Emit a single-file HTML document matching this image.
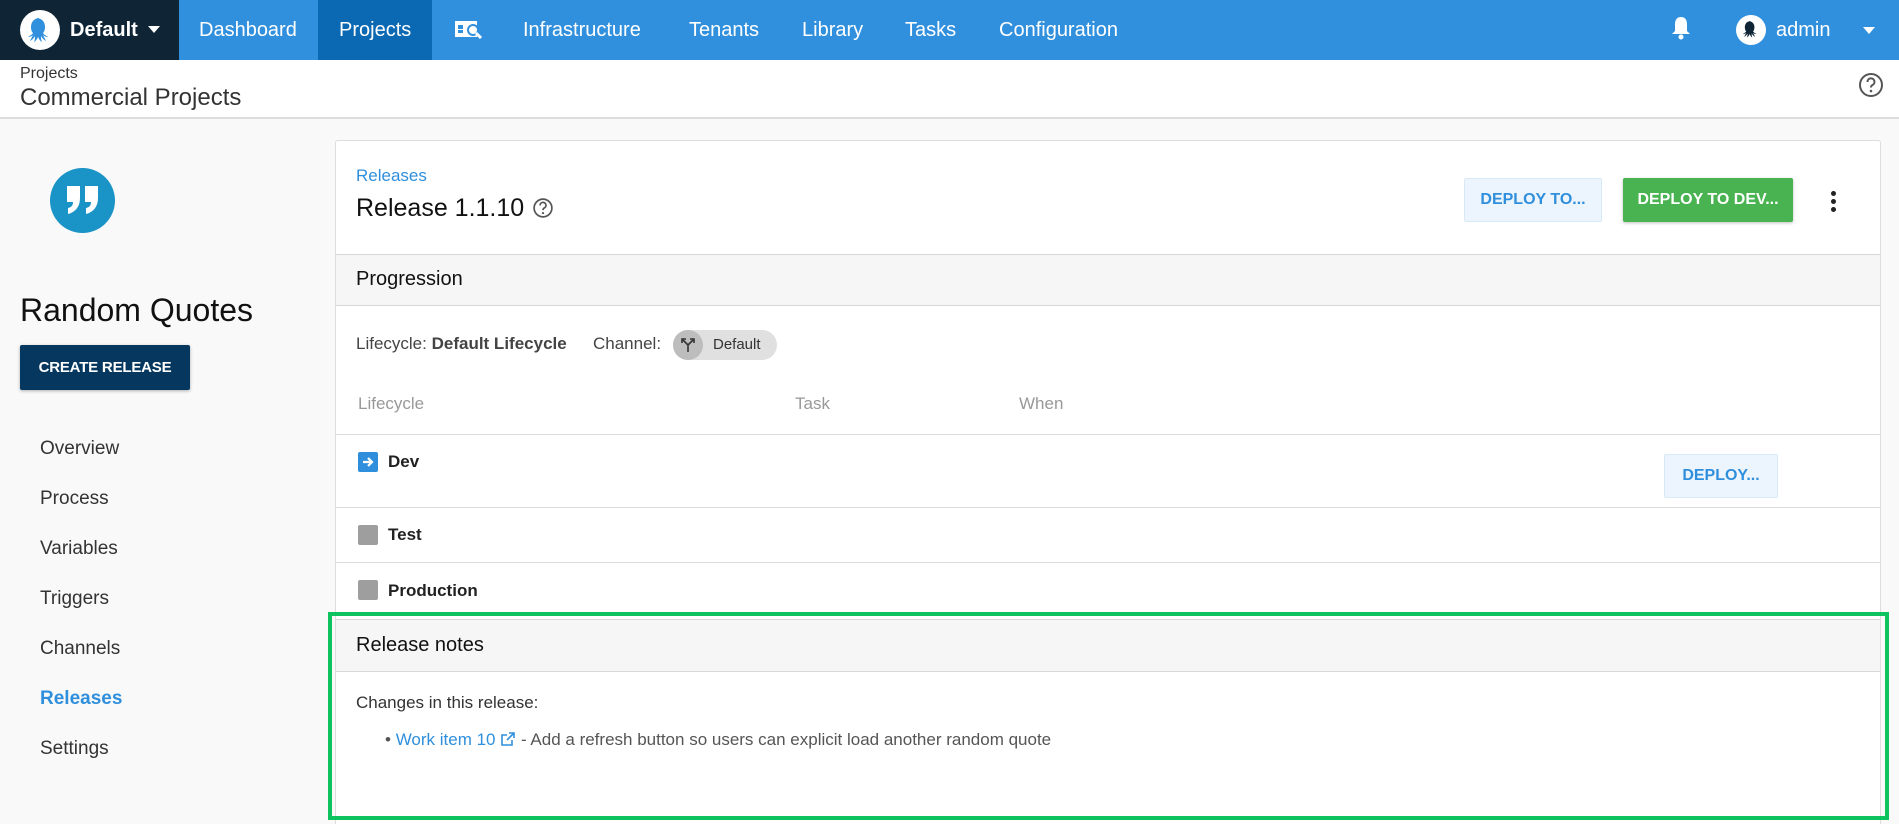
<!DOCTYPE html>
<html style="width:1899px;height:824px;overflow:hidden"><head><meta charset="utf-8"><style>
*{box-sizing:border-box;margin:0;padding:0}
body{width:1899px;height:824px;overflow:hidden;background:#f9f9f9;font-family:"Liberation Sans",Roboto,sans-serif;position:relative;color:#333}
.a{position:absolute;white-space:nowrap}
.nav{position:absolute;left:0;top:0;width:1899px;height:60px;background:#3190dd}
.nav .t{position:absolute;top:0;line-height:60px;color:#fff;font-size:20px}
.card{position:absolute;left:335px;top:140px;width:1546px;height:684px;background:#fff;border:1px solid #ddd;border-bottom:none;border-radius:3px 3px 0 0}
.sec{position:absolute;left:0;width:100%;background:#f6f6f6;border-top:1px solid #d8d8d8;border-bottom:1px solid #d8d8d8}
.hl{position:absolute;left:0;width:100%;height:1px;background:#dcdcdc}
.side{font-size:19px;color:#333;left:40px}
.sq{position:absolute;width:20px;height:20px;border-radius:2px;background:#9e9e9e}
</style></head><body>
<div class="nav">
 <div class="a" style="left:0;top:0;width:179px;height:60px;background:#0f2535"></div>
 <div class="a" style="left:318px;top:0;width:114px;height:60px;background:#0b68b2"></div>
 <div class="a" style="left:20px;top:10px;width:40px;height:40px;border-radius:50%;background:#fff"></div>
 <svg class="a" style="left:24px;top:14px" width="32" height="32" viewBox="0 0 32 32"><path d="M16 4c-6 0-9 4-9 9 0 3 1 5 2 6-1 2-4 3-5 4 2 0 4-1 5-2-1 2-2 4-3 6 2-1 4-3 5-5 0 2 0 4-1 6 2-1 3-3 4-5 1 2 2 4 4 5-1-2-1-4-1-6 1 2 3 4 5 5-1-2-2-4-3-6 1 1 3 2 5 2-1-1-4-2-5-4 1-1 2-3 2-6 0-5-3-9-9-9z" fill="#3190dd"/></svg>
 <div class="t" style="left:70px;font-weight:bold">Default</div>
 <div class="a" style="left:148px;top:26px;border-left:6px solid transparent;border-right:6px solid transparent;border-top:7px solid #fff"></div>
 <div class="t" style="left:199px">Dashboard</div>
 <div class="t" style="left:339px">Projects</div>
 <svg class="a" style="left:454px;top:19px" width="30" height="22" viewBox="0 0 30 22"><rect x="1" y="2" width="22" height="16" fill="#fff"/><rect x="4" y="6" width="5" height="4" fill="#3190dd"/><rect x="4" y="11" width="5" height="3" fill="#3190dd"/><circle cx="19" cy="11" r="5" fill="#fff" stroke="#3190dd" stroke-width="2"/><path d="M22 14l5 5" stroke="#fff" stroke-width="3"/></svg>
 <div class="t" style="left:523px">Infrastructure</div>
 <div class="t" style="left:689px">Tenants</div>
 <div class="t" style="left:802px">Library</div>
 <div class="t" style="left:905px">Tasks</div>
 <div class="t" style="left:999px">Configuration</div>
 <svg class="a" style="left:1670px;top:15px" width="22" height="26" viewBox="0 0 22 26"><path d="M11 2c-4 0-6 3-6 7v7l-3 3h18l-3-3V9c0-4-2-7-6-7z" fill="#fff"/><circle cx="11" cy="22" r="2.5" fill="#fff"/></svg>
 <div class="a" style="left:1736px;top:15px;width:30px;height:30px;border-radius:50%;background:#fff"></div>
 <svg class="a" style="left:1740px;top:19px" width="22" height="22" viewBox="0 0 32 32"><path d="M16 3c-6 0-9 4-9 9 0 3 1 5 2 6-1 2-4 3-5 4 2 0 4-1 5-2-1 2-2 4-3 6 2-1 4-3 5-5 0 2 0 4-1 6 2-1 3-3 4-5 1 2 2 4 4 5-1-2-1-4-1-6 1 2 3 4 5 5-1-2-2-4-3-6 1 1 3 2 5 2-1-1-4-2-5-4 1-1 2-3 2-6 0-5-3-9-9-9z" fill="#0f2535"/></svg>
 <div class="t" style="left:1776px">admin</div>
 <div class="a" style="left:1863px;top:27px;border-left:6px solid transparent;border-right:6px solid transparent;border-top:7px solid #fff"></div>
</div>
<div class="a" style="left:0;top:60px;width:1899px;height:59px;background:#fff;border-bottom:2px solid #ddd"></div>
<div class="a" style="left:20px;top:65px;font-size:16px;color:#333">Projects</div>
<div class="a" style="left:20px;top:84px;font-size:24px;color:#333">Commercial Projects</div>
<svg class="a" style="left:1858px;top:72px" width="26" height="26" viewBox="0 0 26 26"><circle cx="13" cy="13" r="11" fill="none" stroke="#555" stroke-width="2"/><path d="M9.5 10a3.5 3.5 0 1 1 5 3c-1.2.6-1.5 1.3-1.5 2.5" fill="none" stroke="#555" stroke-width="2"/><circle cx="13" cy="19" r="1.3" fill="#555"/></svg>

<div class="a" style="left:50px;top:168px;width:65px;height:65px;border-radius:50%;background:#1a93c6"></div>
<svg class="a" style="left:65px;top:184px" width="36" height="32" viewBox="0 0 36 32"><path d="M2 2h13v12c0 8-4 14-12 16v-6c4-1 5-3 5-6H2z" fill="#fff"/><path d="M20 2h13v12c0 8-4 14-12 16v-6c4-1 5-3 5-6h-6z" fill="#fff"/></svg>
<div class="a" style="left:20px;top:292px;font-size:32px;color:#111">Random Quotes</div>
<div class="a" style="left:20px;top:345px;width:170px;height:45px;background:#06385f;border-radius:2px;box-shadow:0 1px 3px rgba(0,0,0,.3);color:#fff;font-weight:bold;font-size:15px;letter-spacing:-0.2px;line-height:45px;text-align:center">CREATE RELEASE</div>
<div class="a side" style="top:438px">Overview</div>
<div class="a side" style="top:488px">Process</div>
<div class="a side" style="top:538px">Variables</div>
<div class="a side" style="top:588px">Triggers</div>
<div class="a side" style="top:638px">Channels</div>
<div class="a side" style="top:688px;color:#2f8fdc;font-weight:bold">Releases</div>
<div class="a side" style="top:738px">Settings</div>

<div class="card">
 <div class="a" style="left:20px;top:25px;font-size:17px;color:#2f8fdc">Releases</div>
 <div class="a" style="left:20px;top:53px;font-size:25px;color:#111">Release 1.1.10</div>
 <svg class="a" style="left:196px;top:56px" width="22" height="22" viewBox="0 0 26 26"><circle cx="13" cy="13" r="10.5" fill="none" stroke="#555" stroke-width="2"/><path d="M9.5 10a3.5 3.5 0 1 1 5 3c-1.2.6-1.5 1.3-1.5 2.5" fill="none" stroke="#555" stroke-width="2"/><circle cx="13" cy="19" r="1.3" fill="#555"/></svg>
 <div class="a" style="left:1128px;top:37px;width:138px;height:44px;background:#ecf5fd;border:1px solid #d8e8f5;border-radius:2px;color:#2f8fdc;font-weight:bold;font-size:16px;line-height:42px;text-align:center">DEPLOY TO...</div>
 <div class="a" style="left:1287px;top:37px;width:170px;height:44px;background:#48b350;border-radius:2px;box-shadow:0 1px 3px rgba(0,0,0,.25);color:#fff;font-weight:bold;font-size:16px;line-height:44px;text-align:center">DEPLOY TO DEV...</div>
 <div class="a" style="left:1495px;top:50px;width:5px;height:5px;border-radius:50%;background:#222;box-shadow:0 8px 0 #222,0 16px 0 #222"></div>
 <div class="sec" style="top:113px;height:52px"></div>
 <div class="a" style="left:20px;top:127px;font-size:20px;color:#111">Progression</div>
 <div class="a" style="left:20px;top:193px;font-size:17px;color:#444">Lifecycle: <b>Default Lifecycle</b></div>
 <div class="a" style="left:257px;top:193px;font-size:17px;color:#444">Channel:</div>
 <div class="a" style="left:337px;top:189px;width:104px;height:30px;border-radius:15px;background:#e0e0e0"></div>
 <div class="a" style="left:337px;top:189px;width:30px;height:30px;border-radius:50%;background:#bdbdbd"></div>
 <svg class="a" style="left:344px;top:196px" width="16" height="16" viewBox="0 0 16 16"><path d="M8 15V8L3 3M8 8l5-5M2 6V2h4M14 6V2h-4" fill="none" stroke="#333" stroke-width="1.6"/></svg>
 <div class="a" style="left:377px;top:195px;font-size:15px;color:#333">Default</div>
 <div class="a" style="left:22px;top:253px;font-size:17px;color:#999">Lifecycle</div>
 <div class="a" style="left:459px;top:253px;font-size:17px;color:#999">Task</div>
 <div class="a" style="left:683px;top:253px;font-size:17px;color:#999">When</div>
 <div class="hl" style="top:293px"></div>
 <div class="a" style="left:22px;top:311px;width:20px;height:20px;border-radius:2px;background:#2f8fdc"></div>
 <svg class="a" style="left:24px;top:313px" width="16" height="16" viewBox="0 0 16 16"><path d="M3 8h9M8 4l4 4-4 4" fill="none" stroke="#fff" stroke-width="2.2"/></svg>
 <div class="a" style="left:52px;top:311px;font-size:17px;font-weight:bold;color:#222">Dev</div>
 <div class="a" style="left:1328px;top:313px;width:114px;height:44px;background:#ecf5fd;border:1px solid #d8e8f5;border-radius:2px;color:#2f8fdc;font-weight:bold;font-size:16px;line-height:42px;text-align:center">DEPLOY...</div>
 <div class="hl" style="top:366px"></div>
 <div class="sq" style="left:22px;top:384px"></div>
 <div class="a" style="left:52px;top:384px;font-size:17px;font-weight:bold;color:#222">Test</div>
 <div class="hl" style="top:421px"></div>
 <div class="sq" style="left:22px;top:439px"></div>
 <div class="a" style="left:52px;top:440px;font-size:17px;font-weight:bold;color:#222">Production</div>
 <div class="sec" style="top:478px;height:53px"></div>
 <div class="a" style="left:20px;top:493px;font-size:20px;color:#111">Release notes</div>
 <div class="a" style="left:20px;top:552px;font-size:17px;color:#333">Changes in this release:</div>
 <div class="a" style="left:49px;top:589px;font-size:17px;color:#555">• <span style="color:#2f8fdc">Work item 10 <svg width="16" height="16" viewBox="0 0 16 16" style="vertical-align:-2px"><path d="M12 9v5H2V4h5M9 2h5v5M14 2L7 9" fill="none" stroke="#2f8fdc" stroke-width="1.6"/></svg></span> - Add a refresh button so users can explicit load another random quote</div>
</div>
<div class="a" style="left:328px;top:612px;width:1561px;height:208px;border:4px solid #0cc35e"></div>
</body></html>
